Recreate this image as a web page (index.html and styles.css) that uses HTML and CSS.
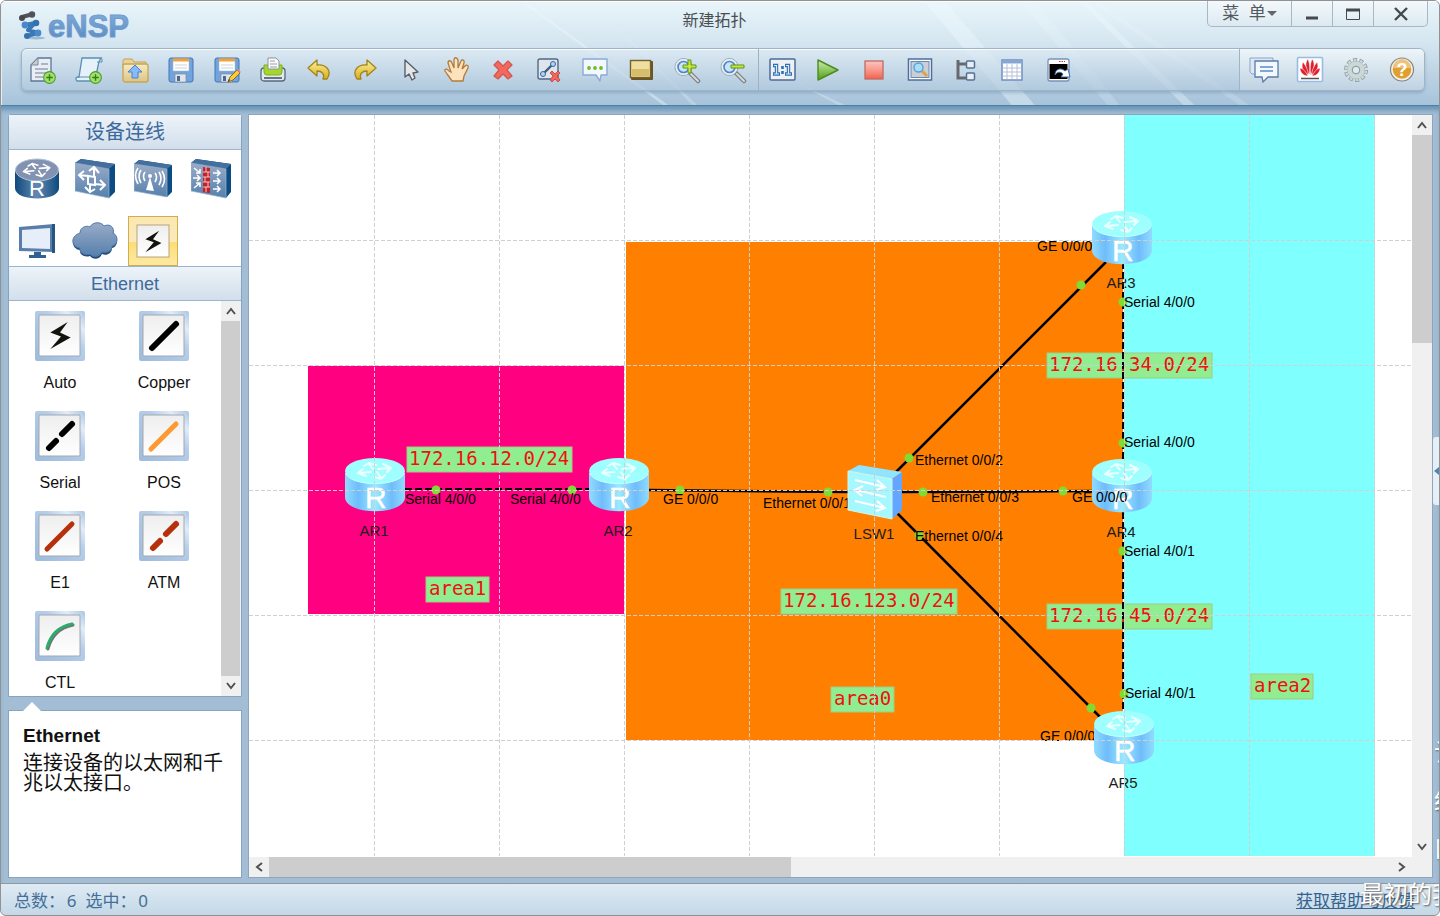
FILE: index.html
```html
<!DOCTYPE html>
<html lang="zh-CN">
<head>
<meta charset="utf-8">
<title>新建拓扑 - eNSP</title>
<link rel="stylesheet" href="styles.css">
</head>
<body>
<svg class="defs" aria-hidden="true">
  <defs>
    <linearGradient id="gDev" x1="0" y1="0" x2="0" y2="1"><stop offset="0" stop-color="#9aabc8"/><stop offset="1" stop-color="#5580ac"/></linearGradient>
    <linearGradient id="gSide" x1="0" y1="0" x2="1" y2="0"><stop offset="0" stop-color="#0d4a7c"/><stop offset=".5" stop-color="#6489b2"/><stop offset="1" stop-color="#0d4a7c"/></linearGradient>
    <linearGradient id="gLite" x1="0" y1="0" x2="1" y2="0"><stop offset="0" stop-color="#8fdcff"/><stop offset=".22" stop-color="#6fbcfb"/><stop offset=".5" stop-color="#9aeaff"/><stop offset=".78" stop-color="#6fbcfb"/><stop offset="1" stop-color="#8fdcff"/></linearGradient>
    <linearGradient id="gPane" x1="0" y1="0" x2="0" y2="1"><stop offset="0" stop-color="#eeeeee"/><stop offset="1" stop-color="#ffffff"/></linearGradient>
    <linearGradient id="gFrame" x1="0" y1="1" x2="1" y2="0"><stop offset="0" stop-color="#9dbbdc"/><stop offset=".6" stop-color="#b4cdea"/><stop offset=".8" stop-color="#e0ecfa"/><stop offset="1" stop-color="#a9c4e2"/></linearGradient>
    <linearGradient id="gLogo" x1="0" y1="0" x2="0" y2="1"><stop offset="0" stop-color="#86b0de"/><stop offset="1" stop-color="#5686be"/></linearGradient>
    <linearGradient id="gGold" x1="0" y1="0" x2="0" y2="1"><stop offset="0" stop-color="#fbf3a0"/><stop offset="1" stop-color="#d8ae18"/></linearGradient>
    <linearGradient id="gSand" x1="0" y1="0" x2="0" y2="1"><stop offset="0" stop-color="#f6ebc2"/><stop offset="1" stop-color="#dcc583"/></linearGradient>
    <linearGradient id="gRed" x1="0" y1="0" x2="0" y2="1"><stop offset="0" stop-color="#fcc5bd"/><stop offset=".5" stop-color="#f8998c"/><stop offset="1" stop-color="#f4604c"/></linearGradient>
    <linearGradient id="gGreen" x1="0" y1="0" x2="0" y2="1"><stop offset="0" stop-color="#cdeeb0"/><stop offset="1" stop-color="#4da015"/></linearGradient>
    <symbol id="arrows4" viewBox="0 0 40 20">
      <g fill="none" stroke="#fff" stroke-width="2" stroke-linejoin="round" stroke-linecap="round">
        <path d="M18 8L14 3M9 5L14 2L21 4"/><path d="M23 8L35 7M28 3L36 7L32 11"/><path d="M16 11L4 12M8 8L3 12L11 15"/><path d="M22 11L26 17M19 16L26 18L30 14"/>
      </g>
    </symbol>
    <symbol id="router" viewBox="0 0 60 54">
      <path d="M0 15V39C0 58 60 58 60 39V15Z" fill="url(#gLite)"/>
      <ellipse cx="30" cy="13" rx="30" ry="13" fill="#9fffff"/>
      <path d="M1 15C4 29 56 29 59 15" fill="none" stroke="#c4ffff" stroke-width="1"/>
      <use href="#arrows4" x="10" y="3" width="40" height="20" opacity=".8"/>
      <text class="router-letter" x="20" y="50">R</text>
    </symbol>
    <symbol id="pane" viewBox="0 0 50 50">
      <rect width="50" height="50" rx="2" fill="url(#gFrame)"/>
      <rect x="4" y="4" width="41" height="41" rx="1" fill="url(#gPane)" stroke="#a3a7ad"/>
    </symbol>
    <symbol id="plusBadge" viewBox="0 0 12 12">
      <circle cx="6" cy="6" r="5.4" fill="#a3df6b" stroke="#4c9a2a"/><path d="M6 3V9M3 6H9" stroke="#2f8018" stroke-width="1.3"/>
    </symbol>
    <symbol id="bolt" viewBox="0 0 22 30"><path d="M19 1L1 12L12 16L1 29L22 17L11 12Z" fill="#11130c"/></symbol>
    <symbol id="disk" viewBox="0 0 28 28">
      <rect x="2" y="2" width="24" height="24" rx="2" fill="#71a3dc" stroke="#4277b8"/>
      <rect x="6" y="3" width="16" height="12" fill="#fff" stroke="#a5b8cc" stroke-width=".6"/><rect x="6" y="2.5" width="16" height="3" fill="#f2a33a"/>
      <path d="M8 9H20M8 12H20" stroke="#cdd3d8"/><rect x="8" y="18" width="11" height="8" fill="#dfe5ec" stroke="#7d8ea1" stroke-width=".7"/><rect x="10" y="20" width="3" height="5" fill="#50678a"/>
    </symbol>
    <symbol id="lens" viewBox="0 0 28 28">
      <path d="M17 17L25 25" stroke="#7c8084" stroke-width="4.5" stroke-linecap="round"/><path d="M18 18L25 25" stroke="#d6d9dc" stroke-width="2" stroke-linecap="round"/>
      <circle cx="10.5" cy="11" r="8.5" fill="#c9e3fa" stroke="#98a6b3" stroke-width="1"/><circle cx="10.5" cy="11" r="7" fill="none" stroke="#e8edf1" stroke-width="2"/><circle cx="10.5" cy="11" r="5.5" fill="none" stroke="#4d86c9" stroke-width="1.6"/>
    </symbol>
    <symbol id="undo" viewBox="0 0 28 28">
      <path d="M3 12L12 4V9C20 8 28 14 22 23H18C20 18 17 15 12 15V20Z" fill="url(#gGold)" stroke="#a3831b" stroke-width="1.3" stroke-linejoin="round"/>
    </symbol>
  </defs>
</svg>

<div class="window">
  <header class="header">
    <svg class="rays" viewBox="0 0 1440 104" preserveAspectRatio="none" aria-hidden="true">
      <g fill="#eefaff">
        <path d="M924 0H945L1035 104H1012Z" opacity=".4"/><path d="M1020 0H1036L1120 104H1108Z" opacity=".2"/><path d="M1080 0H1087L1195 104H1184Z" opacity=".35"/><path d="M1090 0L1098 0L1250 104H1240Z" opacity=".18"/><path d="M520 0H523L668 104H663Z" opacity=".4"/><path d="M610 20L697 104H692Z" opacity=".25"/><path d="M790 78L845 104H838Z" opacity=".3"/>
      </g>
    </svg>
    <div class="titlebar">
      <svg class="logo" viewBox="0 0 116 30" role="img" aria-label="eNSP">
        <ellipse cx="17" cy="28" rx="9" ry="1.5" fill="#9eb9d0"/>
        <g stroke-linecap="round"><path d="M3 7L14 4" stroke="#505357" stroke-width="4"/><circle cx="3" cy="8" r="3" fill="#45484c"/><circle cx="13" cy="4.5" r="3.2" fill="#505357"/>
        <path d="M6 15L16 13M16 13L9 20M9 20L19 23M8 26L19 23" fill="none" stroke="#3a78b8" stroke-width="4"/><circle cx="6" cy="15" r="3.4" fill="#4b8aca"/><circle cx="17" cy="13" r="3.3" fill="#3571ae"/><circle cx="8" cy="26" r="3" fill="#3571ae"/><circle cx="19" cy="23" r="3.4" fill="#4b8aca"/></g>
        <text class="logo-text" x="29" y="27">eNSP</text>
      </svg>
      <h1 class="title">新建拓扑</h1>
      <div class="controls">
        <button class="ctl ctl-menu">菜&nbsp; 单<span class="caret"></span></button>
        <button class="ctl" aria-label="最小化"><svg width="14" height="14"><path d="M1 11H13" stroke="#46494c" stroke-width="3"/></svg></button>
        <button class="ctl" aria-label="最大化"><svg width="14" height="14"><path d="M.5 2.5H13.5V12.5H.5Z" fill="none" stroke="#46494c"/><path d="M0 3H14" stroke="#46494c" stroke-width="3"/></svg></button>
        <button class="ctl ctl-close" aria-label="关闭"><svg width="14" height="14"><path d="M1 1L13 13M13 1L1 13" stroke="#46494c" stroke-width="2.4"/></svg></button>
      </div>
    </div>

    <div class="toolbar">
      <div class="group">
        <button class="tool" aria-label="新建拓扑"><svg viewBox="0 0 28 28"><path d="M9 2H22V25H2V9Z" fill="#e9edf4" stroke="#5e7699" stroke-width="1.3"/><path d="M9 2V9H2Z" fill="#c6cbd2" stroke="#7e8996"/><path d="M12 8H19M6 13H19M6 17H17M6 21H14" stroke="#97a3b2" stroke-width="1.3"/><use href="#plusBadge" x="14" y="15" width="13" height="13"/></svg></button>
        <button class="tool" aria-label="新建试卷"><svg viewBox="0 0 28 28"><path d="M7 2H27C24 3 24 6 23 10L20 25H2C0 23 1 21 3 21H4Z" fill="#e6f2fb" stroke="#5a90ae" stroke-width="1.3"/><path d="M3 21H15M22 6H27V3" fill="none" stroke="#5a90ae"/><use href="#plusBadge" x="14" y="15" width="13" height="13"/></svg></button>
        <button class="tool" aria-label="打开"><svg viewBox="0 0 28 28"><path d="M3 3H11L13 6H25V12H2V4Z" fill="#ead394" stroke="#c6a555"/><rect x="2" y="8" width="25" height="18" rx="2" fill="url(#gSand)" stroke="#c6a555" stroke-width="1.3"/><path d="M14 9L21 16H17V22H11V16H7Z" fill="#84bbf8" stroke="#4a7fd2"/></svg></button>
        <button class="tool" aria-label="保存"><svg viewBox="0 0 28 28"><use href="#disk" width="28" height="28"/></svg></button>
        <button class="tool" aria-label="另存为"><svg viewBox="0 0 28 28"><use href="#disk" width="28" height="28"/><path d="M15 26L17 21L24 14L27 17L20 24Z" fill="#f6ce3b" stroke="#96651a"/><path d="M24 14L27 17L28 16L25 13Z" fill="#ef8585"/><path d="M15 26L17 24L16 23Z" fill="#322"/></svg></button>
        <button class="tool" aria-label="打印"><svg viewBox="0 0 28 28"><rect x="2" y="12" width="24" height="13" rx="3" fill="#e4e9ef" stroke="#57687d" stroke-width="1.3"/><path d="M5 9H23V16Q23 19 20 19H8Q5 19 5 16Z" fill="#a4d62d" stroke="#7fb11f"/><path d="M9 2H17L20 5V13H9Z" fill="#fafafa" stroke="#8c929b"/><path d="M11 5H16M11 8H18M11 11H18" stroke="#9aa2ab"/><path d="M5 22H23" stroke="#667487" stroke-width="2"/></svg></button>
        <button class="tool" aria-label="撤销"><svg viewBox="0 0 28 28"><use href="#undo" width="28" height="28"/></svg></button>
        <button class="tool" aria-label="恢复"><svg viewBox="0 0 28 28"><g transform="matrix(-1 0 0 1 28 0)"><use href="#undo" width="28" height="28"/></g></svg></button>
        <button class="tool" aria-label="选择"><svg viewBox="0 0 28 28"><path d="M8 4V21L12 18L15 24L18 22L16 17L21 16Z" fill="#e4e6e8" stroke="#5b6068" stroke-width="1.4" stroke-linejoin="round"/></svg></button>
        <button class="tool" aria-label="移动"><svg viewBox="0 0 28 28"><path d="M9 25C7 22 4 18 2 15C1 13 4 12 6 15L8 16L5 7C5 4 8 4 9 7L11 12V4C11 1 14 1 15 4V12L18 5C19 3 22 4 21 7L19 13L22 10C24 8 26 10 25 12L21 20L20 25Z" fill="#fce3bd" stroke="#b07b3d" stroke-width="1.3"/></svg></button>
        <button class="tool" aria-label="删除"><svg viewBox="0 0 28 28"><path d="M5 9L9 5L14 10L19 5L23 9L18 14L23 20L19 23L14 18L9 23L5 20L10 14Z" fill="#f3675c" stroke="#cf5850" stroke-width="1.2" stroke-linejoin="round"/></svg></button>
        <button class="tool" aria-label="删除连线"><svg viewBox="0 0 28 28"><rect x="3" y="3" width="20" height="20" rx="2" fill="#dfe5ec" stroke="#536883" stroke-width="1.4"/><path d="M8 18L18 8" stroke="#455b79" stroke-width="2.4"/><circle cx="8" cy="18" r="2.5" fill="#a7d6ff" stroke="#3e6598"/><circle cx="18" cy="8" r="2.5" fill="#a7d6ff" stroke="#3e6598"/><path d="M15 17L17 15L20 18L23 15L25 17L22 20L25 24L23 26L20 23L17 26L15 24L18 20Z" fill="#f3675c" stroke="#b94138" stroke-width=".8"/></svg></button>
        <button class="tool" aria-label="文本"><svg viewBox="0 0 28 28"><path d="M2 3H26V19H20L19 25L15 19H2Z" fill="#f3f8fe" stroke="#8ba9d2" stroke-width="1.4" stroke-linejoin="round"/><g fill="#6fbb28"><circle cx="8" cy="12" r="1.9"/><circle cx="14" cy="12" r="1.9"/><circle cx="20" cy="12" r="1.9"/></g></svg></button>
        <button class="tool" aria-label="调色板"><svg viewBox="0 0 28 28"><rect x="4" y="5" width="22" height="19" rx="1" fill="#6a5520"/><rect x="3.5" y="4.5" width="20" height="17" fill="#efe0a2" stroke="#75602a" stroke-width="1.4"/><rect x="5" y="13" width="17" height="7" fill="#d6bd6a"/></svg></button>
        <button class="tool" aria-label="放大"><svg viewBox="0 0 28 28"><use href="#lens" width="28" height="28"/><path d="M15 4H18V9H23V12H18V17H15V12H10V9H15Z" fill="#c6e83c" stroke="#5f951b"/></svg></button>
        <button class="tool" aria-label="缩小"><svg viewBox="0 0 28 28"><use href="#lens" width="28" height="28"/><path d="M12 9H25V12H12Z" fill="#c6e83c" stroke="#5f951b"/></svg></button>
      </div>
      <div class="group group-run">
        <button class="tool" aria-label="原始大小"><svg viewBox="0 0 28 28"><rect x="2" y="3" width="25" height="21" rx="1" fill="#eef0f2" stroke="#486c9d" stroke-width="1.5"/><g fill="none" stroke="#2f70b5" stroke-width="3.4"><path d="M5 9.500H8.500V18M5 18H12"/><path d="M17 9.500H20.500V18M17 18H24"/><path d="M14.500 10V13M14.500 15V18" stroke-width="2.600"/></g><g fill="none" stroke="#d6ecff" stroke-width="1.200"><path d="M6 9.500H8.500V18M6 18H11"/><path d="M18 9.500H20.500V18M18 18H23"/></g></svg></button>
        <button class="tool" aria-label="开启设备"><svg viewBox="0 0 28 28"><path d="M4 4L24 14L4 24Z" fill="url(#gGreen)" stroke="#4c8b1c" stroke-width="1.4" stroke-linejoin="round"/></svg></button>
        <button class="tool" aria-label="停止设备"><svg viewBox="0 0 28 28"><rect x="5" y="5" width="18" height="18" fill="url(#gRed)" stroke="#bd6b66" stroke-width="1.3"/></svg></button>
        <button class="tool" aria-label="数据抓包"><svg viewBox="0 0 28 28"><rect x="2.5" y="3" width="23" height="21" fill="#fff" stroke="#4b6e9e" stroke-width="1.5"/><rect x="5" y="5.5" width="18" height="16" fill="#c9cfd5" stroke="#6b87ad"/><path d="M16 15L21 20" stroke="#dba544" stroke-width="3"/><circle cx="12.5" cy="11.5" r="4.5" fill="#a5e0fb" stroke="#5c9fd6" stroke-width="1.4"/></svg></button>
        <button class="tool" aria-label="显示树"><svg viewBox="0 0 28 28"><path d="M6 4V22H14M6 8H14" fill="none" stroke="#666a6f" stroke-width="3"/><rect x="14.5" y="5" width="8" height="7" rx="1" fill="#eceef0" stroke="#52719a" stroke-width="1.5"/><rect x="14.5" y="17" width="8" height="7" rx="1" fill="#eceef0" stroke="#52719a" stroke-width="1.5"/></svg></button>
        <button class="tool" aria-label="显示网格"><svg viewBox="0 0 28 28"><rect x="4" y="4" width="20" height="20" fill="#fff" stroke="#6d8fc1" stroke-width="1.5"/><path d="M5 6H23" stroke="#86a6d3" stroke-width="3"/><path d="M9 8V23M14 8V23M19 8V23M5 12H23M5 16H23M5 20H23" stroke="#b4c1d6"/></svg></button>
        <button class="tool" aria-label="打开命令行"><svg viewBox="0 0 28 28"><rect x="4" y="3" width="21" height="22" rx="2" fill="#fff" stroke="#7692b8" stroke-width="1.3"/><rect x="5.5" y="8" width="18" height="15" fill="#000"/><path d="M15 5.5H21" stroke="#c33" stroke-width="1.2" stroke-dasharray="1.5 1"/><path d="M11 19C11 13 17 11 21 15L24 13L26 21L17 21L19 18C16 15 13 16 11 19Z" fill="#fff" stroke="#356da8"/></svg></button>
      </div>
      <div class="group group-help">
        <button class="tool" aria-label="论坛"><svg viewBox="0 0 28 28"><path d="M0 2H23V18H2L0 16Z" fill="#dce9f5" stroke="#8ba4c4"/><path d="M5 5H28V21H18L13 26L12 21H5Z" fill="#f3f8fd" stroke="#5b7ba8" stroke-width="1.3"/><path d="M10 11H23M10 15H23" stroke="#5c8bc9" stroke-width="1.3"/></svg></button>
        <button class="tool" aria-label="官网"><svg viewBox="0 0 28 28"><rect x="1.5" y="1.5" width="25" height="24" rx="1" fill="#fff" stroke="#98bce4" stroke-width="1.6"/><g fill="#e0202c" stroke="#fff" stroke-width=".5"><path d="M13.5 19C9 13 9 6 12 3C14 8 14 13 13.500 19Z"/><path d="M14.5 19C19 13 19 6 16 3C14 8 14 13 14.500 19Z"/><path d="M12.5 19C6 15 5 10 7 6C10 10 12 14 12.500 19Z"/><path d="M15.5 19C22 15 23 10 21 6C18 10 16 14 15.500 19Z"/><path d="M12 20C7 20 4 16 4 12C8 13 10 16 12 20Z"/><path d="M16 20C21 20 24 16 24 12C20 13 18 16 16 20Z"/></g><path d="M5 22.5H23" stroke="#555" stroke-width="1.6"/></svg></button>
        <button class="tool" aria-label="设置"><svg viewBox="0 0 28 28"><circle cx="14" cy="14" r="10" fill="none" stroke="#8d9a9c" stroke-width="4" stroke-dasharray="3.9 2.38"/><circle cx="14" cy="14" r="6" fill="none" stroke="#8a989b" stroke-width="6"/><circle cx="14" cy="14" r="6.3" fill="none" stroke="#ccd7d8" stroke-width="5"/><circle cx="14" cy="14" r="10" fill="none" stroke="#ccd7d8" stroke-width="2.5" stroke-dasharray="2.7 3.58" stroke-dashoffset="-.6"/><circle cx="14" cy="14" r="3.8" fill="#dfeaf1" stroke="#87969b"/></svg></button>
        <button class="tool" aria-label="帮助"><svg viewBox="0 0 28 28"><circle cx="14" cy="13.5" r="11.5" fill="#f5f1e8" stroke="#85837f" stroke-width="1.2"/><circle cx="14" cy="13.5" r="9.3" fill="#e0a030"/><path d="M5 12A9 9 0 0 1 23 12Z" fill="#eec37c"/><text class="help-mark" x="14" y="20">?</text></svg></button>
      </div>
    </div>
  </header>

  <main class="workspace">
    <aside class="sidebar">
      <section class="panel">
        <h2 class="panel-head">设备连线</h2>
        <div class="devices">
          <button class="device" aria-label="路由器"><svg width="44" height="42" viewBox="0 0 44 42"><path d="M0 12V30C0 44 44 44 44 30V12Z" fill="url(#gSide)"/><ellipse cx="22" cy="12" rx="21.5" ry="11" fill="#8193b1" stroke="#b4c3d8"/><use href="#arrows4" x="6" y="4" width="32" height="16"/><text class="device-letter" x="22" y="38">R</text></svg></button>
          <button class="device" aria-label="交换机"><svg width="40" height="40" viewBox="0 0 40 40"><path d="M0 4L6 0L40 5V33L34 39Z" fill="#0b4d82"/><path d="M0 4L6 0L40 5L34 10Z" fill="#456f9d"/><path d="M0 4L34 10V39L0 32Z" fill="url(#gDev)" stroke="#9bb4cf" stroke-width=".7"/><g fill="none" stroke="#fff" stroke-width="2"><path d="M19 9V18M14 12L19 8L24 14M15 25V32M10 28L15 33L20 30M4 16L13 17M9 12L4 16L9 21M20 25L29 26M25 21L30 26L25 31M13 17V25L20 26V18Z"/></g></svg></button>
          <button class="device" aria-label="无线"><svg width="38" height="38" viewBox="0 0 38 38"><path d="M0 4L5 0L38 5V32L33 37Z" fill="#0b4d82"/><path d="M0 4L5 0L38 5L33 9Z" fill="#456f9d"/><path d="M0 4L33 9V37L0 31Z" fill="url(#gDev)" stroke="#9bb4cf" stroke-width=".7"/><path d="M16 17L20 31L12 30Z" fill="#fff"/><circle cx="16" cy="16" r="2" fill="#fff"/><g fill="none" stroke="#fff" stroke-width="1.6"><path d="M11 12Q8 16 11 21M7 10Q3 16 7 23M4 8Q-1 15 4 24M21 13Q24 17 21 22M25 12Q29 18 25 25M28 11Q33 19 28 27"/></g></svg></button>
          <button class="device" aria-label="安全设备"><svg width="40" height="40" viewBox="0 0 40 40"><path d="M0 4L5 0L40 5V33L35 39Z" fill="#0b4d82"/><path d="M0 4L5 0L40 5L35 10Z" fill="#456f9d"/><path d="M0 4L35 10V39L0 32Z" fill="url(#gDev)" stroke="#9bb4cf" stroke-width=".7"/><path d="M12 8L19 9V34L12 33Z" fill="#c32229"/><path d="M12 13H19M12 18H19M12 23H19M12 28H19M15 8V13M17 13V18M14 18V23M17 23V28M15 28V33" stroke="#f2d9dc" stroke-width=".9"/><g stroke="#fff" stroke-width="1.5" fill="none"><path d="M3 9L9 14M9 10V14H5M2 19H9M6 16L9 19L6 22M3 29L9 24M5 24H9V28M22 14H29M26 11L29 14L26 17M22 22H29M26 19L29 22L26 25M22 30H29M26 27L29 30L26 33"/></g></svg></button>
          <button class="device" aria-label="终端"><svg width="36" height="34" viewBox="0 0 36 34"><path d="M0 3L35 0V28L0 27Z" fill="#587fab"/><path d="M33 0H36V29H33Z" fill="#285482"/><path d="M3 6L31 4V25L3 24Z" fill="#e5eef9"/><path d="M15 28H22V31H27V34H10V31H15Z" fill="#33618f"/></svg></button>
          <button class="device" aria-label="其他设备"><svg width="46" height="38" viewBox="0 0 46 38"><path d="M8 12C8 6 15 4 18 6C21 0 30 0 32 5C38 2 43 7 41 12C47 15 46 25 40 26C40 32 34 34 30 32C27 39 20 37 18 34C12 36 7 32 8 28C-1 27-2 15 8 12Z" fill="#234d7c"/><path d="M8 11C8 5 15 3 18 5C21-1 30 0 32 4C38 1 43 6 41 11C47 14 46 23 40 24C40 30 34 31 30 30C27 36 20 35 18 32C12 34 7 30 8 26C-1 25-2 14 8 11Z" fill="url(#gDev)" stroke="#4f7aab"/></svg></button>
          <button class="device device-on" aria-label="设备连线"><svg width="34" height="34" viewBox="0 0 34 34"><rect x="1" y="1" width="32" height="32" fill="url(#gPane)" stroke="#b8a57c"/><use href="#bolt" x="8" y="6" width="18" height="23"/></svg></button>
        </div>
        <h2 class="panel-head panel-sub">Ethernet</h2>
        <div class="cables">
          <div class="cable-list">
            <button class="cable"><svg width="50" height="50"><use href="#pane"/><use href="#bolt" x="14" y="10" width="22" height="29"/></svg>Auto</button>
            <button class="cable"><svg width="50" height="50"><use href="#pane"/><path d="M13 37L37 13" stroke="#000" stroke-width="6" stroke-linecap="round"/></svg>Copper</button>
            <button class="cable"><svg width="50" height="50"><use href="#pane"/><path d="M14 37L21 30M27 23L37 13" stroke="#000" stroke-width="6" stroke-linecap="round"/></svg>Serial</button>
            <button class="cable"><svg width="50" height="50"><use href="#pane"/><path d="M12 38L37 13" stroke="#ff9a32" stroke-width="5" stroke-linecap="round"/></svg>POS</button>
            <button class="cable"><svg width="50" height="50"><use href="#pane"/><path d="M12 38L37 13" stroke="#b6300c" stroke-width="5" stroke-linecap="round"/></svg>E1</button>
            <button class="cable"><svg width="50" height="50"><use href="#pane"/><path d="M14 37L21 30M27 23L37 13" stroke="#b6300c" stroke-width="6" stroke-linecap="round"/></svg>ATM</button>
            <button class="cable"><svg width="50" height="50"><use href="#pane"/><path d="M13 38Q18 18 38 14" fill="none" stroke="#707070" stroke-width="3" stroke-linecap="round"/><path d="M12 37Q17 17 37 13" fill="none" stroke="#2eab6b" stroke-width="3" stroke-linecap="round"/></svg>CTL</button>
          </div>
          <div class="vbar">
            <button class="bar-btn" aria-label="向上滚动"><svg width="10" height="8"><path d="M1 7L5 2L9 7" class="chev"/></svg></button>
            <div class="thumb thumb-full"></div>
            <button class="bar-btn" aria-label="向下滚动"><svg width="10" height="8"><path d="M1 1L5 6L9 1" class="chev"/></svg></button>
          </div>
        </div>
      </section>
      <section class="info">
        <h3 class="info-title">Ethernet</h3>
        <p class="info-text">连接设备的以太网和千兆以太接口。</p>
      </section>
    </aside>

    <section class="stage">
      <div class="viewport">
        <svg class="topology" width="1600" height="1000" viewBox="249 115 1600 1000" role="img" aria-label="网络拓扑">
          <rect x="308" y="366" width="316" height="248" fill="#ff0080"/>
          <rect x="626" y="242" width="497" height="498" fill="#ff8000"/>
          <rect x="1124" y="115" width="251" height="741" fill="#80ffff"/>
          <g class="note">
            <rect x="407" y="447" width="165" height="25"/><rect x="426" y="577" width="63" height="25"/><rect x="781" y="589" width="176" height="25"/><rect x="831" y="687" width="63" height="25"/><rect x="1047" y="353" width="165" height="25"/><rect x="1047" y="604" width="165" height="25"/><rect x="1251" y="674" width="62" height="25"/>
            <text x="409" y="465">172.16.12.0/24</text><text x="429" y="595">area1</text><text x="783" y="607">172.16.123.0/24</text><text x="834" y="705">area0</text><text x="1049" y="371">172.16.34.0/24</text><text x="1049" y="622">172.16.45.0/24</text><text x="1254" y="692">area2</text>
          </g>
          <g class="wire">
            <path d="M648 490L848 492M902 492L1094 491M896 472L1106 262M896 512L1100 717"/>
            <path class="serial" d="M405 489H590M1123 262V465M1123 512V712"/>
          </g>
          <g class="port">
            <circle cx="436" cy="490" r="4.5"/><circle cx="572" cy="490" r="4.5"/><circle cx="680" cy="490" r="4.5"/><circle cx="828" cy="492" r="4.5"/><circle cx="909" cy="458" r="4.5"/><circle cx="923" cy="492" r="4.5"/><circle cx="919" cy="535" r="4.5"/><circle cx="1063" cy="491" r="4.5"/><circle cx="1081" cy="285" r="4.5"/><circle cx="1091" cy="708" r="4.5"/><circle cx="1123" cy="302" r="4.5"/><circle cx="1123" cy="443" r="4.5"/><circle cx="1123" cy="551" r="4.5"/><circle cx="1124" cy="694" r="4.5"/>
          </g>
          <g class="if-label">
            <text x="405" y="504">Serial 4/0/0</text><text x="510" y="504">Serial 4/0/0</text><text x="663" y="504">GE 0/0/0</text><text x="763" y="508">Ethernet 0/0/1</text><text x="915" y="465">Ethernet 0/0/2</text><text x="931" y="502">Ethernet 0/0/3</text><text x="915" y="541">Ethernet 0/0/4</text><text x="1037" y="251">GE 0/0/0</text><text x="1040" y="741">GE 0/0/0</text><text x="1124" y="307">Serial 4/0/0</text><text x="1124" y="447">Serial 4/0/0</text><text x="1124" y="556">Serial 4/0/1</text><text x="1125" y="698">Serial 4/0/1</text>
          </g>
          <use href="#router" x="345" y="458" width="60" height="54"/>
          <use href="#router" x="589" y="458" width="60" height="54"/>
          <use href="#router" x="1092" y="211" width="60" height="54"/>
          <use href="#router" x="1092" y="459" width="60" height="54"/>
          <use href="#router" x="1094" y="711" width="60" height="54"/>
          <rect x="1040" y="741" width="54" height="4" fill="#fff"/>
          <path d="M848 471L859 465L902 472L892 479Z" fill="#8fe5ff"/><path d="M892 479L902 472V510L892 519Z" fill="#63a5ff"/><path d="M848 471L892 479V519L848 510Z" fill="#a5f8ff" stroke="#d0f8e8"/>
          <path d="M855 480L885 487M877 480L885 487L876 490M886 497L856 490M863 486L855 490L862 496M855 501L885 508M877 501L885 508L876 511" fill="none" stroke="#fff" stroke-width="2"/>
          <g class="if-label"><text x="1072" y="502">GE 0/0/0</text></g>
          <g class="node-label">
            <text x="374" y="536">AR1</text><text x="618" y="536">AR2</text><text x="1121" y="288">AR3</text><text x="1121" y="537">AR4</text><text x="1123" y="788">AR5</text><text x="874" y="539">LSW1</text>
          </g>
          <path class="grid" d="M374.5 115V856M499.5 115V856M624.5 115V856M749.5 115V856M874.5 115V856M999.5 115V856M1124.5 115V856M1249.5 115V856M1374.5 115V856M249 240.5H1412M249 365.5H1412M249 490.5H1412M249 615.5H1412M249 740.5H1412"/>
        </svg>
      </div>
      <div class="vbar">
        <button class="bar-btn" aria-label="向上滚动"><svg width="10" height="8"><path d="M1 7L5 2L9 7" class="chev"/></svg></button>
        <div class="track"><div class="thumb thumb-v"></div></div>
        <button class="bar-btn" aria-label="向下滚动"><svg width="10" height="8"><path d="M1 1L5 6L9 1" class="chev"/></svg></button>
      </div>
      <div class="hbar">
        <button class="bar-btn" aria-label="向左滚动"><svg width="8" height="10"><path d="M7 1L2 5L7 9" class="chev"/></svg></button>
        <div class="track"><div class="thumb thumb-h"></div></div>
        <button class="bar-btn" aria-label="向右滚动"><svg width="8" height="10"><path d="M1 1L6 5L1 9" class="chev"/></svg></button>
      </div>
    </section>
    <button class="drawer" aria-label="展开侧栏"><svg width="5" height="8"><path d="M5 0V8L0 4Z" fill="#5184b0"/></svg></button>
  </main>

  <footer class="status">
    <span>总数：&hairsp;6</span><span>选中：&hairsp;0</span>
    <a class="help-link" href="#">获取帮助与反馈</a>
  </footer>
  <div class="mark-side" aria-hidden="true"><span>让</span><span>红</span><span>口</span></div>
  <div class="mark-foot" aria-hidden="true">最初的我</div>
</div>
</body>
</html>
```
FILE: styles.css
```css
* { box-sizing: border-box; }
body { margin: 0; font-family: "Liberation Sans", "Noto Sans CJK SC", sans-serif; color: #111; }
h1, h2, h3, p { margin: 0; font-weight: normal; }
button { padding: 0; border: 0; background: none; font: inherit; color: inherit; }
svg { display: block; }
.defs { position: absolute; width: 0; height: 0; }

.window { position: relative; display: flex; flex-direction: column; height: 100vh; overflow: hidden; border: 1px solid #929292; border-radius: 6px; background: #a3bdd5; }

.header { position: relative; flex: none; height: 105px; border-bottom: 1px solid #4d7fa3; background: linear-gradient(#e9f5fa 0, #d6e7f1 38%, #b9d0e2 75%, #a7c3da 100%); box-shadow: inset 0 1px #fff, inset 1px 0 #e5eff6; }
.rays { position: absolute; inset: 0; width: 100%; height: 100%; }
.titlebar { position: relative; display: grid; grid-template-columns: 1fr auto 1fr; height: 47px; padding: 0 11px 0 0; }
.logo { width: 116px; height: 30px; margin: 9px 0 0 18px; overflow: visible; }
.logo-text { font: bold 31px "Liberation Sans", sans-serif; fill: url(#gLogo); stroke: #6f9bcf; stroke-width: 1px; }
.title { margin-top: 8px; font-size: 16px; line-height: 24px; color: #4a4e52; }
.controls { display: flex; justify-self: end; align-self: start; height: 26px; border: 1px solid #a9b8c2; border-top: 0; border-radius: 0 0 5px 5px; background: linear-gradient(#f3f9fc, #dce9f1); }
.ctl { display: flex; align-items: center; justify-content: center; width: 41px; border-right: 1px solid #a9b8c2; }
.ctl-menu { width: 84px; font-size: 17px; line-height: 24px; color: #55595c; }
.ctl-close { width: 53px; border-right: 0; }
.caret { margin-left: 1px; border: 5px solid transparent; border-top-color: #666; border-bottom: 0; }

.toolbar { position: relative; display: flex; height: 43px; margin: 0 14px 0 20px; border: 1px solid #9fb4c5; border-radius: 6px; background: linear-gradient(rgba(225, 237, 245, .7), rgba(177, 201, 222, .7)); box-shadow: inset 0 1px rgba(255, 255, 255, .8), 0 2px 3px rgba(80, 120, 155, .35); }
.group { display: flex; align-items: center; }
.group-run { border-left: 1px solid #9db1c2; }
.group-help { margin-left: auto; border-left: 1px solid #9fb4c5; border-radius: 0 5px 5px 0; background: linear-gradient(#edf5f9, #bfd2e2); }
.tool { display: grid; place-items: center; width: 46px; height: 41px; }
.tool svg { width: 28px; height: 28px; margin-right: 4px; overflow: visible; }
.group-run .tool svg { margin-right: 0; }
.group-help .tool svg { margin-left: 2px; margin-right: 0; }
.help-mark { font: bold 18px "Liberation Sans", sans-serif; text-anchor: middle; fill: #fff; }

.workspace { position: relative; flex: 1; display: grid; grid-template-columns: 234px minmax(0, 1fr); gap: 6px; min-height: 0; padding: 8px 6px 5px 7px; background: #a3bdd5; box-shadow: inset 0 6px 5px -2px #6793b5; }
.sidebar { display: flex; flex-direction: column; gap: 13px; min-height: 0; }
.panel { flex: 1; display: flex; flex-direction: column; min-height: 0; border: 1px solid #87a3c2; border-radius: 3px 3px 0 0; background: #fff; }
.panel-head { height: 35px; border-bottom: 1px solid #9db4cb; font-size: 20px; line-height: 34px; text-align: center; color: #3d6a9d; background: linear-gradient(#edf3f9, #d2dfeb); }
.panel-sub { border-top: 1px solid #9db4cb; font-size: 18px; }
.devices { display: grid; grid-template-columns: repeat(4, 1fr); grid-template-rows: 58px 58px; }
.device { display: grid; place-items: center; justify-self: center; align-self: center; width: 50px; height: 50px; margin-right: 3px; }
.device:nth-child(n+5) { align-self: end; }
.device-on { border: 1px solid #d1ad4b; background: linear-gradient(#fbe7b0 0, #fae9bd 52%, #fddd72 52%, #fde9a4 100%); }
.device-letter { font: 22px "Liberation Sans", sans-serif; text-anchor: middle; fill: #fff; }
.cables { flex: 1; display: flex; min-height: 0; }
.cable-list { flex: 1; display: grid; grid-template-columns: 104px 104px; grid-auto-rows: 100px; min-height: 0; overflow: hidden; padding-top: 10px; }
.cable { display: flex; flex-direction: column; align-items: center; gap: 12px; margin-right: 2px; font-size: 16px; line-height: 20px; }

.vbar { display: flex; flex-direction: column; width: 20px; background: #f0f0f0; }
.hbar { display: flex; height: 20px; background: #f0f0f0; grid-column: 1 / 3; padding-right: 20px; }
.bar-btn { flex: none; display: grid; place-items: center; width: 20px; height: 20px; }
.track { flex: 1; }
.thumb { background: #cdcdcd; }
.thumb-full { flex: 1; margin-right: 1px; }
.thumb-v { height: 29.6%; }
.thumb-h { width: 46.5%; height: 100%; }
.chev { fill: none; stroke: #505050; stroke-width: 2px; }

.info { position: relative; flex: none; min-height: 168px; padding: 14px; border: 1px solid #87a3c2; background: #fff; }
.info::before { content: ""; position: absolute; left: 14px; top: -9px; border: 9px solid transparent; border-top: 0; border-bottom-color: #fff; }
.info-title { font-size: 19px; line-height: 22px; font-weight: bold; }
.info-text { margin-top: 6px; font-size: 20px; line-height: 20px; }

.stage { display: grid; grid-template-columns: minmax(0, 1fr) 20px; grid-template-rows: minmax(0, 1fr) 20px; min-height: 0; border: 1px solid #8fa5bb; background: #f0f0f0; }
.viewport { overflow: hidden; background: #fff; }
.router-letter { font: 30px "Liberation Sans", sans-serif; fill: #fff; stroke: #fff; stroke-width: .4px; }
.note rect { fill: #90ee90; stroke: #a3c982; }
.note text { font: 19px "DejaVu Sans Mono", monospace; fill: #f01010; }
.wire { fill: none; stroke: #000; stroke-width: 2.5px; }
.serial { stroke-width: 2px; stroke-dasharray: 7px 3px; }
.port { fill: #80dc32; }
.if-label { font: 14px "Liberation Sans", sans-serif; fill: #000; }
.node-label { font: 15px "Liberation Sans", sans-serif; text-anchor: middle; fill: #1c1c1c; }
.grid { fill: none; stroke: #d0d0d0; stroke-dasharray: 4px 2px; }
.drawer { position: absolute; right: 0; top: 331px; display: grid; place-items: center; width: 6px; height: 68px; border-radius: 3px 0 0 3px; background: #e5eff7; }

.status { flex: none; display: flex; align-items: center; gap: 9px; height: 32px; padding: 0 24px 0 13px; border-top: 1px solid #8d9aa6; background: linear-gradient(#dfebf4, #c3d8e7); font: 17px "Noto Sans", "Noto Sans CJK SC", sans-serif; color: #456f98; }
.help-link { margin-left: auto; color: #34638f; }
.mark-foot, .mark-side { position: absolute; overflow: hidden; font-size: 24px; line-height: 32px; white-space: nowrap; color: #fff; text-shadow: 1px 1px 2px #555; pointer-events: none; }
.mark-foot { left: calc(100% - 79px); right: 0; bottom: 4px; }
.mark-side { display: flex; flex-direction: column; gap: 16px; left: calc(100% - 5px); right: 0; bottom: 50px; }
```
